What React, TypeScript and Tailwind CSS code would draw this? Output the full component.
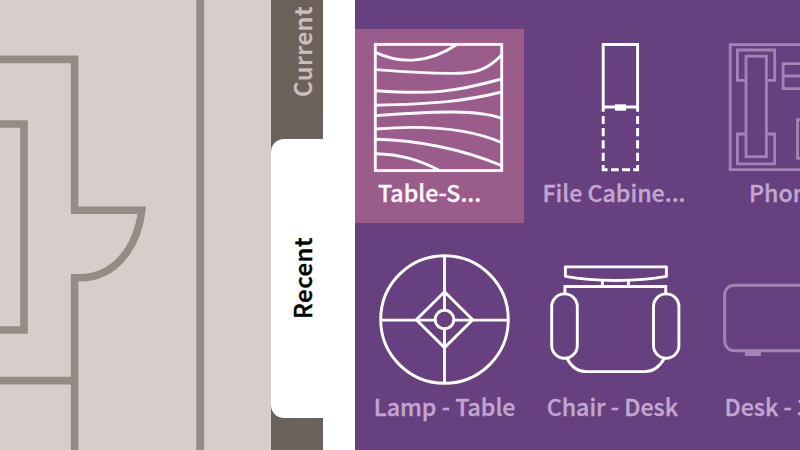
import type { ReactNode } from "react";

const FONT = "font-['Noto_Sans_CJK_SC','Open_Sans',sans-serif]";

function FloorPlan() {
  return (
    <svg className="block h-full w-full" viewBox="0 0 271 450" fill="none" stroke="#968c86" strokeWidth="7.6">
      <path d="M-5 59.4H74.6V210.2H141.800C137.500 247 115 277.800 80 277.800H74.600V455" strokeMiterlimit="10" />
      <path d="M-5 124H24V330H-5" />
      <path d="M-5 380.6H74" />
      <path d="M200.200 -5V455" strokeWidth="7.9" />
    </svg>
  );
}

function TabRail() {
  return (
    <div className={`flex h-full w-[52px] shrink-0 flex-col bg-[#6c625c] ${FONT} text-[24px] font-medium [-webkit-text-stroke:0.4px_currentColor]`}>
      <div className="flex h-[139px] items-end justify-center pb-[42px] pl-[9px]">
        <span className="rotate-180 whitespace-nowrap leading-[36px] tracking-[0.5px] text-[#c9bfbc] [writing-mode:vertical-rl]">Current</span>
      </div>
      <div className="flex h-[279px] items-center justify-center rounded-l-[13px] bg-white pb-[2px] pl-[9px]">
        <span className="rotate-180 whitespace-nowrap leading-[36px] tracking-[0.5px] text-black [writing-mode:vertical-rl]">Recent</span>
      </div>
    </div>
  );
}

function TableIcon() {
  return (
    <svg className="block h-[145px] w-[169px] shrink-0" viewBox="355 29 169 145" fill="none" stroke="#fdf8fd" strokeWidth="2.9">
      <rect x="375.300" y="44.400" width="126.400" height="126.200" />
      <path d="M376 52.600C401 64.500 430 62.500 456 45" />
      <path d="M376 69.600C400 71.500 420 73.200 450 73.400C475 73.600 487 70.500 501.500 55" />
      <path d="M376 90.700C430 94.500 453 92.500 501.500 79" />
      <path d="M376 105.300C430 104 462 102 501.500 92" />
      <path d="M376 115.600C440 110.800 478 110 501.500 118.300" />
      <path d="M376 129C430 124.500 470 129 501.500 142.500" />
      <path d="M376 139.300C420 140.500 460 148.500 501.500 165.500" />
      <path d="M376 153.700C400 154.300 418 159.500 438.700 170" />
    </svg>
  );
}

function CabinetIcon() {
  return (
    <svg className="block h-[145px] w-[180px] shrink-0" viewBox="524 29 180 145" fill="none" stroke="#fff" strokeWidth="2.9">
      <path d="M603.200 111.700V44.500H637.600V111.700M603 107H638" />
      <path d="M603.200 116V124M603.200 128.100V136.300M603.200 140.300V148.600M603.200 152.800V161M603.200 165V171.100M601.800 169.700H607.600" />
      <path d="M637.600 116V124M637.600 128.100V136.300M637.600 140.300V148.600M637.600 152.800V161M637.600 165V171.100M639 169.700H633.300" />
      <path d="M611 169.700H618.700M622 169.700H630" />
      <rect x="615" y="104.300" width="11" height="6.400" fill="#fff" stroke="none" />
    </svg>
  );
}

function PhoneBoothIcon() {
  return (
    <svg className="block h-[145px] w-[96px] shrink-0" viewBox="704 29 96 145" fill="none" stroke="#a384b6" strokeWidth="2.8">
      <path d="M805 44.600H730.200V169.700H805" />
      <path d="M746 80.300H737.400V50H774.700V80.300H766.300" />
      <path d="M746 134H737.400V163.800H774.700V134H766.300" />
      <rect x="746" y="56.200" width="20.400" height="100.500" />
      <path d="M805 63.700H783.100V88.600H805M783.100 76H805" />
      <path d="M805 119.700H797.500V158.400H805" />
    </svg>
  );
}

function LampIcon() {
  return (
    <svg className="block h-[165px] w-[169px] shrink-0" viewBox="355 223 169 165" fill="none" stroke="#fff" strokeWidth="2.9">
      <circle cx="444.500" cy="319.500" r="63.800" />
      <path d="M444.500 256V310M444.500 329V383M381 320.100H435M454 320.100H508" />
      <path d="M444.500 291.700L472.700 319.800L444.500 347.600L416.300 319.800Z" />
      <circle cx="444.500" cy="319.500" r="9.300" />
    </svg>
  );
}

function ChairIcon() {
  return (
    <svg className="block h-[165px] w-[180px] shrink-0" viewBox="524 223 180 165" fill="none" stroke="#fff" strokeWidth="2.9" strokeLinejoin="round">
      <path d="M565.400 266.900H666.400V276.400C638 281.800 594 281.800 565.400 276.400Z" />
      <path d="M602.400 280V286.500M628.500 280V286.500" />
      <path d="M564.900 293V286.500H665.700V293" strokeLinejoin="miter" />
      <rect x="551.700" y="293.900" width="25.600" height="64.400" rx="12.800" />
      <rect x="653.500" y="293.900" width="25.400" height="64.400" rx="12.700" />
      <path d="M567 358.500C571 366 577 371.600 586 371.600H645C654 371.600 660 366 664.300 358.500" />
    </svg>
  );
}

function DeskIcon() {
  return (
    <svg className="block h-[165px] w-[96px] shrink-0" viewBox="704 223 96 165" fill="none" stroke="#a384b6" strokeWidth="2.9">
      <rect x="724.700" y="285.300" width="130" height="65.500" rx="9.500" />
      <rect x="744.800" y="351" width="16" height="5" fill="#a384b6" stroke="none" />
    </svg>
  );
}

type ItemProps = { label: string; icon: ReactNode; cell?: string; text: string };

function Item({ label, icon, cell = "", text }: ItemProps) {
  return (
    <div className={`flex min-w-0 flex-col overflow-hidden ${cell}`}>
      {icon}
      <span className={`whitespace-nowrap ${FONT} text-[23.2px] font-medium leading-[36px] [-webkit-text-stroke:0.35px_currentColor] ${text}`}>{label}</span>
    </div>
  );
}

export default function App() {
  return (
    <div className="flex h-[450px] w-[800px] overflow-hidden bg-white">
      <div className="h-full w-[271px] shrink-0 bg-[#d7cecb]">
        <FloorPlan />
      </div>
      <TabRail />
      <div className="w-8 shrink-0 bg-white" />
      <div className="grid h-full min-w-0 flex-1 grid-cols-[169px_180px_1fr] grid-rows-[194px_227px] bg-[#66407f] pt-[29px]">
        <Item label="Table-S..." icon={<TableIcon />} cell="bg-[#9a5c8b]" text="pl-[23px] text-[#fdf5fc]" />
        <Item label="File Cabine..." icon={<CabinetIcon />} text="pl-[18.5px] text-[#c2a6d0]" />
        <Item label="Phone Booth" icon={<PhoneBoothIcon />} text="pl-[45px] text-[#c2a6d0]" />
        <Item label="Lamp - Table" icon={<LampIcon />} text="pl-[18.7px] text-[#c2a6d0]" />
        <Item label="Chair - Desk" icon={<ChairIcon />} text="pl-[22.7px] text-[#c2a6d0]" />
        <Item label="Desk - 3" icon={<DeskIcon />} text="pl-[20.5px] text-[#c2a6d0]" />
      </div>
    </div>
  );
}
